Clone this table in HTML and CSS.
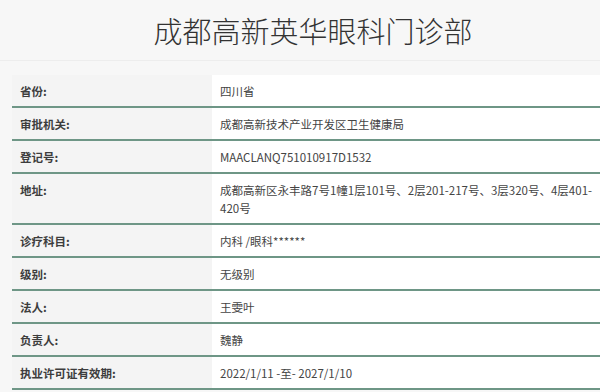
FILE: index.html
```html
<!DOCTYPE html>
<html lang="zh-CN">
<head>
<meta charset="utf-8">
<title>成都高新英华眼科门诊部</title>
<link rel="stylesheet" href="styles.css">
</head>
<body>
<header class="header">
  <h1 class="title">成都高新英华眼科门诊部</h1>
</header>
<section class="info">
  <div class="row"><div class="label">省份:</div><div class="value">四川省</div></div>
  <div class="row"><div class="label">审批机关:</div><div class="value">成都高新技术产业开发区卫生健康局</div></div>
  <div class="row"><div class="label">登记号:</div><div class="value">MAACLANQ751010917D1532</div></div>
  <div class="row"><div class="label">地址:</div><div class="value">成都高新区永丰路7号1幢1层101号、2层201-217号、3层320号、4层401-420号</div></div>
  <div class="row"><div class="label">诊疗科目:</div><div class="value">内科 /眼科******</div></div>
  <div class="row"><div class="label">级别:</div><div class="value">无级别</div></div>
  <div class="row"><div class="label">法人:</div><div class="value">王雯叶</div></div>
  <div class="row"><div class="label">负责人:</div><div class="value">魏静</div></div>
  <div class="row"><div class="label">执业许可证有效期:</div><div class="value">2022/1/11 -至- 2027/1/10</div></div>
</section>
</body>
</html>
```

FILE: styles.css
```css
* { box-sizing: border-box; }
html, body {
  margin: 0;
  padding: 0;
  background: #f7f7f7;
  font-family: "Noto Sans CJK SC", "Noto Sans", sans-serif;
  color: #444;
}
.header {
  height: 61px;
  padding-left: 26px;
  border-bottom: 1px solid #ededed;
}
.title {
  margin: 0;
  text-align: center;
  font-size: 29px;
  line-height: 60px;
  font-weight: 300;
  color: #333;
}
.info {
  margin: 14px 0 0 12px;
}
.row {
  display: grid;
  grid-template-columns: 200px 1fr;
  border-bottom: 2px solid #6e9686;
}
.label {
  background: #f4f4f4;
  padding: 7px 8px 6px 8px;
  font-size: 11.5px;
  line-height: 18px;
  font-weight: 700;
  color: #3d3d3d;
}
.value {
  background: #ffffff;
  padding: 7px 6px 6px 8px;
  font-size: 11.5px;
  line-height: 18px;
  color: #444;
}
```
